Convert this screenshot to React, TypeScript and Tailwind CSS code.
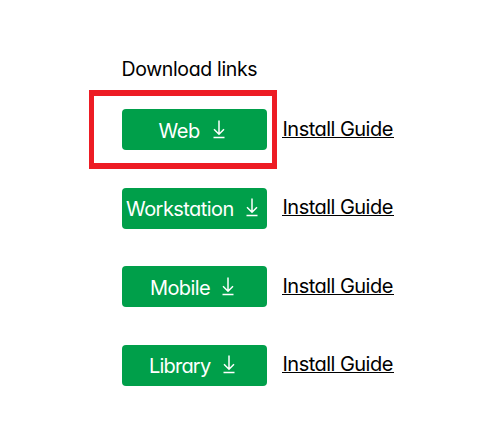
const downloads = [
  { label: 'Web', row: 'mt-0', text: 'w-[42px] tracking-[-0.4px]', pad: 'pl-[36.5px] pb-0', gap: 'ml-[12.5px]', link: 'mt-[8px]', framed: true },
  { label: 'Workstation', row: 'mt-[38px]', text: 'w-[109px] tracking-[-0.55px]', pad: 'pl-[4px] pb-[2px]', gap: 'ml-[11px]', link: 'mt-[7px]' },
  { label: 'Mobile', row: 'mt-[37px]', text: 'w-[60px] tracking-[-0.6px]', pad: 'pl-[28px] pb-0', gap: 'ml-[12px]', link: 'mt-[8px]' },
  { label: 'Library', row: 'mt-[38px]', text: 'w-[62px] tracking-[-0.8px]', pad: 'pl-[27px] pb-[2px]', gap: 'ml-[12px]', link: 'mt-[7px]' },
];

function DownloadIcon() {
  return (
    <svg className="block h-[20px] w-[12px] shrink-0" viewBox="0 0 12 20" fill="none" stroke="currentColor" strokeWidth="1.5">
      <path d="M6 .5v13.5M1 9.3l5 5 5-5M.5 17.6h11" />
    </svg>
  );
}

export default function App() {
  return (
    <main className="h-[428px] w-[498px] overflow-hidden bg-white pl-[122px] pt-[58px] font-['Inter',sans-serif] text-[20px] leading-[24px] text-black [font-feature-settings:'cv11']">
      <h1 className="-ml-[0.5px] h-[24px] whitespace-nowrap text-[19.5px] font-normal leading-[23px] tracking-[-0.35px]">Download links</h1>
      <ul className="mt-[27px]">
        {downloads.map((d) => (
          <li key={d.label} className={`relative flex h-[41px] ${d.row}`}>
            <button className={`flex h-[41px] w-[145px] items-center rounded-[4px] bg-[#009f4a] text-white ${d.pad}`}>
              <span className={`whitespace-nowrap pt-[2px] text-left ${d.text}`}>{d.label}</span>
              <span className={d.gap}><DownloadIcon /></span>
            </button>
            <a className={`ml-[15px] h-[21px] w-[112px] whitespace-nowrap border-b border-black pl-[0.5px] leading-[24px] tracking-[-0.53px] ${d.link}`}>Install Guide</a>
            {d.framed && (
              <span className="pointer-events-none absolute -left-[33px] -top-[19px] h-[79px] w-[188px] border-x-[5px] border-y-[6px] border-[#ed1c24]" />
            )}
          </li>
        ))}
      </ul>
    </main>
  );
}
